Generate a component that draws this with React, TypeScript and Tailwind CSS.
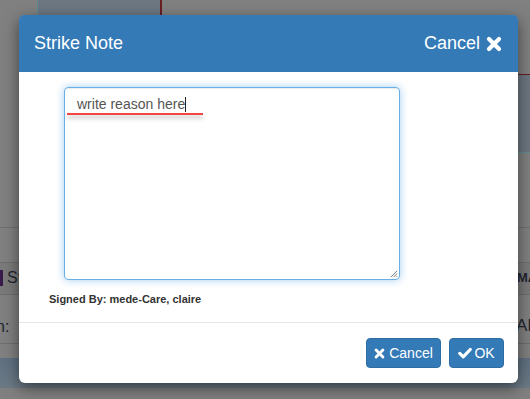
import React from "react";

function XIcon({ className }: { className?: string }) {
  return (
    <svg viewBox="0 0 16 16" className={className} aria-hidden="true">
      <path d="M3 3 L13 13 M13 3 L3 13" stroke="currentColor" strokeWidth="4.2" strokeLinecap="round" fill="none" />
    </svg>
  );
}

function CheckIcon({ className }: { className?: string }) {
  return (
    <svg viewBox="0 0 16 16" className={className} aria-hidden="true">
      <path d="M2 8.5 L6 12.5 L14 4" stroke="currentColor" strokeWidth="3.6" strokeLinecap="round" strokeLinejoin="round" fill="none" />
    </svg>
  );
}

export default function App() {
  return (
    <div className="relative w-[530px] h-[399px] overflow-hidden bg-[#808080] font-['Liberation_Sans',Arial,sans-serif]">
      {/* underlying page seen through the overlay */}
      <div className="absolute left-[37px] top-0 w-[125px] h-[15px] bg-[#6c7782] border-l border-l-[#5e8c93] border-r-2 border-r-[#6a1d22]" />
      <div className="absolute left-[400px] top-[74px] w-[130px] h-[1px] bg-[#6a1d22]" />
      <div className="absolute left-[400px] top-[75px] w-[130px] h-[78px] bg-[#6c7680] border-b border-b-[#5e8c93]" />
      <div className="absolute left-0 top-[227px] w-[530px] h-[1px] bg-[#707070]" />
      <div className="absolute left-0 top-[262px] w-[530px] h-[33px] bg-[#7a7a7a] border-y border-y-[#6e6e6e]" />
      <div className="absolute left-0 top-[343px] w-[530px] h-[1px] bg-[#6e6e6e]" />
      <div className="absolute left-0 top-[358px] w-[530px] h-[30px] bg-gradient-to-b from-[#5f7080] to-[#6c7a86]" />
      <div className="absolute left-0 top-[268px] flex items-center text-[16px] leading-[20px] text-[#1e2530]">
        <span className="w-[3px] h-[16px] bg-[#3a1a4a] mr-[4px]" />
        <span>St</span>
      </div>
      <div className="absolute left-[-4px] top-[317px] text-[16px] leading-[20px] text-[#1e2530]">n:</div>
      <div className="absolute left-[517px] top-[270px] text-[13px] font-bold leading-[16px] text-[#1e2530]">MA</div>
      <div className="absolute left-[516px] top-[316px] text-[17px] leading-[20px] text-[#1e2530]">AI</div>

      {/* modal */}
      <div className="absolute left-[19px] top-[15px] w-[499px] h-[368px] bg-white rounded-[6px] shadow-[0_5px_15px_rgba(0,0,0,0.5)] flex flex-col">
        <div className="h-[57px] bg-[#337ab7] rounded-t-[5px] flex items-center justify-between pl-[15px] pr-[16px] text-white text-[18px]">
          <span>Strike Note</span>
          <span className="flex items-center gap-[6px]">
            Cancel
            <XIcon className="w-[16px] h-[16px]" />
          </span>
        </div>

        <div className="pt-[15px] pb-[15px] pl-[45px] flex flex-col">
          <div className="relative w-[336px] h-[193px] border border-[#66afe9] rounded-[4px] shadow-[inset_0_1px_1px_rgba(0,0,0,0.075),0_0_8px_rgba(102,175,233,0.6)] px-[12px] pt-[6px] text-[14px] leading-[20px] text-[#555555]">
            <span>write reason here</span>
            <span className="inline-block w-[1px] h-[15px] bg-[#222] align-[-3px]" />
            <div className="absolute left-[2px] top-[25px] w-[136px] h-[2px] bg-[#f44444] shadow-[0_3px_4px_rgba(0,0,0,0.3)]" />
            <svg viewBox="0 0 10 10" className="absolute right-[1px] bottom-[1px] w-[9px] h-[9px] text-[#555]">
              <path d="M9 2 L2 9 M9 5 L5 9 M9 8 L8 9" stroke="currentColor" strokeWidth="0.9" fill="none" />
            </svg>
          </div>
          <div className="ml-[-15px] mt-[12px] text-[11px] leading-[15px] font-bold text-[#333]">Signed By: mede-Care, claire</div>
        </div>

        <div className="border-t border-[#e5e5e5] flex-1 flex justify-end items-start pt-[15px] pr-[14px] gap-[8px]">
          <button className="w-[75px] h-[30px] rounded-[4px] bg-[#337ab7] border border-[#2e6da4] text-white text-[14px] flex items-center justify-center gap-[4px]">
            <XIcon className="w-[11px] h-[11px]" />
            <span>Cancel</span>
          </button>
          <button className="w-[55px] h-[30px] rounded-[4px] bg-[#337ab7] border border-[#2e6da4] text-white text-[14px] flex items-center justify-center gap-[2px]">
            <CheckIcon className="w-[14px] h-[14px]" />
            <span>OK</span>
          </button>
        </div>
      </div>
    </div>
  );
}
